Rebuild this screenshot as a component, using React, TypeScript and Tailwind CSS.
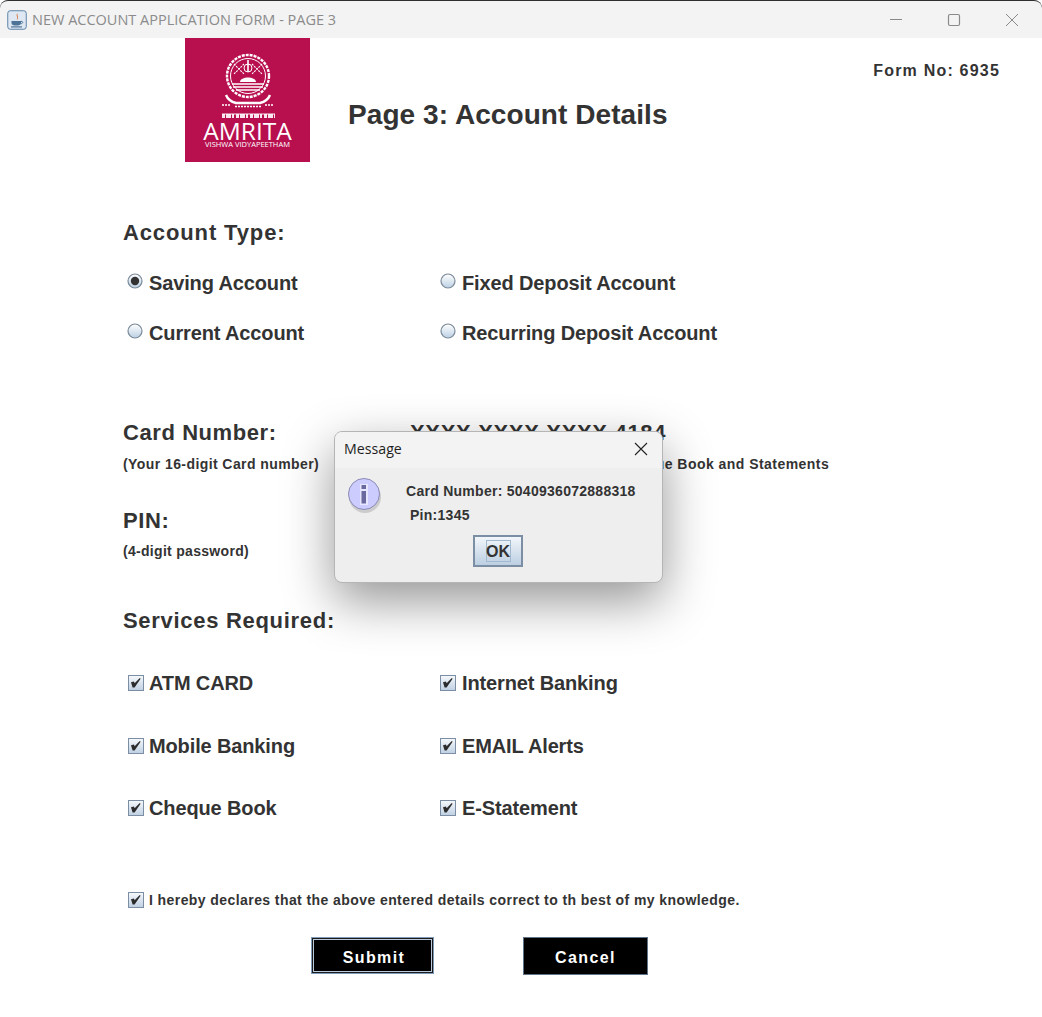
import React from "react";

function Radio({ on, id }: { on?: boolean; id: string }) {
  return (
    <svg width="16" height="16" viewBox="0 0 16 16" className="shrink-0 mb-[4px]">
      <defs>
        <linearGradient id={id} x1="0" y1="0" x2="0" y2="1">
          <stop offset="0" stopColor="#ffffff" />
          <stop offset="1" stopColor="#bcd0e4" />
        </linearGradient>
      </defs>
      <circle cx="8" cy="8" r="7" fill={`url(#${id})`} stroke="#7a8a99" strokeWidth="1.2" />
      {on && <circle cx="8" cy="8" r="4.2" fill="#333333" />}
    </svg>
  );
}

function Check({ id }: { id: string }) {
  return (
    <svg width="16" height="16" viewBox="0 0 16 16" className="shrink-0">
      <defs>
        <linearGradient id={id} x1="0" y1="0" x2="0" y2="1">
          <stop offset="0" stopColor="#f6f9fc" />
          <stop offset="1" stopColor="#bfd0e3" />
        </linearGradient>
      </defs>
      <rect x="0.5" y="0.5" width="15" height="15" fill={`url(#${id})`} stroke="#7b8ea3" />
      <path d="M3 7.2 L6 6.6 L6.6 8.2 L11.8 3 L12.6 3.8 L6.6 12.6 L4.6 12.6 Z" fill="#2b2b2b" />
    </svg>
  );
}

function JavaIcon() {
  return (
    <svg width="20" height="20" viewBox="0 0 20 20" className="shrink-0">
      <rect x="0.75" y="0.75" width="18.5" height="18.5" rx="2.5" fill="#dfe8f2" stroke="#5d83a8" strokeWidth="1" />
      <path d="M10.5 3 C8 6 12 7 9.5 10 C13 8 9.5 6 10.5 3 Z" fill="#d9661f" />
      <path d="M4.5 11 H14 V13 C14 15 12 15.6 9.2 15.6 C6.5 15.6 4.5 15 4.5 13 Z" fill="#4d7397" />
      <path d="M14 11.4 C16.4 11 16.4 13.6 13.6 13.8" fill="none" stroke="#4d7397" strokeWidth="1" />
      <rect x="4" y="16.3" width="11" height="1.2" fill="#4d7397" />
    </svg>
  );
}

function Logo() {
  return (
    <div className="w-[125px] h-[124px] bg-[#b8104f] shrink-0 flex flex-col items-center">
      <svg width="60" height="70" viewBox="0 0 60 70" className="mt-[15px] shrink-0" fill="none" stroke="#ffffff">
        <circle cx="30" cy="23" r="21" strokeWidth="2.4" strokeDasharray="3 1" />
        <circle cx="30" cy="23" r="17.5" strokeWidth="1" />
        <path d="M16 11 L26 21 M26 11 L16 21 M34 11 L44 21 M44 11 L34 21" strokeWidth="1.1" strokeDasharray="2 1" />
        <path d="M30 7 V19" strokeWidth="1.6" />
        <circle cx="30" cy="15" r="4" strokeWidth="1" />
        <path d="M22 29 C22 23 38 23 38 29 Z" fill="#ffffff" stroke="none" />
        <path d="M14 31 H46 M15 34 H45 M18 37 H42" strokeWidth="1.3" />
        <path d="M8 42 C10 47 14 49 18 50 L42 50 C46 49 50 47 52 42" strokeWidth="2.4" />
        <path d="M4 52 H13 M47 52 H56 M17 53.5 H43" strokeWidth="1.6" strokeDasharray="2 1" />
        <path d="M4 63 H57" strokeWidth="4" strokeDasharray="3 1 5 1 2 2" opacity="0.9" />
        <path d="M4 61 H57" strokeWidth="0.9" />
      </svg>
      <div className="mt-[-3px] text-white text-[24.5px] leading-[22px] font-['Open_Sans',sans-serif]">AMRITA</div>
      <div className="mt-[-2px] text-white text-[7.5px] leading-[8px] font-['Open_Sans',sans-serif] whitespace-nowrap">VISHWA VIDYAPEETHAM</div>
    </div>
  );
}

function Dialog() {
  return (
    <div className="absolute left-[334px] top-[431px] w-[329px] h-[152px] rounded-[8px] bg-[#eeeeee] border border-[#b5b5b5] shadow-[0_18px_50px_rgba(0,0,0,0.42)] overflow-hidden flex flex-col">
      <div className="h-[36px] bg-[#f3f3f3] flex items-center justify-between pl-[9px] pr-[14px] pb-[2px] shrink-0">
        <span className="font-['Open_Sans',sans-serif] text-[14.2px] text-[#1f1f1f]">Message</span>
        <svg width="14" height="14" viewBox="0 0 14 14" fill="none" stroke="#222222" strokeWidth="1.1">
          <path d="M1 1 L13 13 M13 1 L1 13" />
        </svg>
      </div>
      <div className="relative flex-1">
        <svg width="36" height="38" viewBox="0 0 36 38" className="absolute left-[12px] top-[9px]">
          <ellipse cx="18" cy="20" rx="16" ry="16" fill="#999999" opacity="0.4" />
          <circle cx="17" cy="17" r="15.5" fill="#ccccff" stroke="#8a8ab5" strokeWidth="1" />
          <rect x="13" y="7" width="8" height="21" fill="#e6e6ff" />
          <rect x="14.5" y="8" width="4.5" height="4" fill="#6a6a9e" />
          <rect x="14.5" y="14" width="4.5" height="12.5" fill="#6a6a9e" />
        </svg>
        <div className="absolute left-[71px] top-[15px] text-[14px] leading-[16px] font-bold text-[#333333] tracking-[0.27px] whitespace-nowrap">Card Number: 5040936072888318</div>
        <div className="absolute left-[75px] top-[39px] text-[14px] leading-[16px] font-bold text-[#333333] tracking-[0.27px] whitespace-nowrap">Pin:1345</div>
        <div className="absolute left-[138px] top-[67px] w-[50px] h-[32px] border-2 border-[#7b8ea3] bg-gradient-to-b from-[#f2f6fa] to-[#bccfe2] flex items-center justify-center">
          <span className="w-[25px] h-[22px] border border-[#a3b9d0] flex items-center justify-center pt-px text-[16px] font-bold text-[#333333]">OK</span>
        </div>
      </div>
    </div>
  );
}

function Choice({ label, mark, inset }: { label: string; mark: React.ReactNode; inset?: boolean }) {
  return (
    <div className="flex items-center gap-[5px] text-[20px] leading-[24px] font-bold text-[#333333] tracking-[-0.13px] whitespace-nowrap">
      <span className={inset ? "w-[17px] flex justify-end" : "w-[17px] flex justify-start"}>{mark}</span>
      <span>{label}</span>
    </div>
  );
}

const heading = "text-[22px] leading-[26px] font-bold text-[#333333]";
const small = "text-[14px] leading-[16px] font-bold text-[#333333] whitespace-nowrap";

export default function App() {
  return (
    <div className="relative w-[1042px] h-[1017px] bg-white overflow-hidden font-['Liberation_Sans',Arial,sans-serif]">
      <div className="h-[38px] bg-[#f3f3f3] border-t border-[#2e2e2e] rounded-t-[8px] flex items-center pl-[7px] pr-[23px]">
        <JavaIcon />
        <span className="ml-[5px] font-['Open_Sans',sans-serif] text-[14.5px] text-[#8b8b8b] whitespace-nowrap">NEW ACCOUNT APPLICATION FORM - PAGE 3</span>
        <div className="ml-auto flex items-center gap-[44px]">
          <svg width="14" height="14" viewBox="0 0 14 14" fill="none" stroke="#8a8a8a" strokeWidth="1"><path d="M1 6.5 H13" /></svg>
          <svg width="14" height="14" viewBox="0 0 14 14" fill="none" stroke="#8a8a8a" strokeWidth="1.2"><rect x="1.5" y="1.5" width="11" height="11" rx="1.5" /></svg>
          <svg width="14" height="14" viewBox="0 0 14 14" fill="none" stroke="#8a8a8a" strokeWidth="1"><path d="M1 1 L13 13 M13 1 L1 13" /></svg>
        </div>
      </div>

      <div className="flex h-[124px] pl-[185px] pr-[42px]">
        <Logo />
        <h1 className="ml-[38px] mt-[61px] text-[28px] leading-[32px] font-bold text-[#333333] tracking-[0.07px] whitespace-nowrap">Page 3: Account Details</h1>
        <div className="ml-auto mt-[24px] text-[16px] leading-[18px] font-bold text-[#333333] tracking-[1.2px] whitespace-nowrap">Form No: 6935</div>
      </div>

      <div className="pl-[123px] pt-[58px]">
        <div className={`${heading} tracking-[0.87px]`}>Account Type:</div>
        <div className="mt-[25px] ml-[4px] grid grid-cols-[313px_1fr] gap-y-[26px]">
          <Choice label="Saving Account" mark={<Radio on id="r1" />} />
          <Choice label="Fixed Deposit Account" mark={<Radio id="r2" />} />
          <Choice label="Current Account" mark={<Radio id="r3" />} />
          <Choice label="Recurring Deposit Account" mark={<Radio id="r4" />} />
        </div>

        <div className="mt-[75px] grid grid-cols-[287px_1fr]">
          <div className={`${heading} tracking-[0.58px]`}>Card Number:</div>
          <div className={`${heading} tracking-[0.67px] whitespace-nowrap`}>XXXX XXXX XXXX 4184</div>
          <div className={`${small} tracking-[0.42px] mt-[10px]`}>(Your 16-digit Card number)</div>
          <div className={`${small} tracking-[0.46px] mt-[10px]`}>It would appear on ATM Card/Cheque Book and Statements</div>
        </div>

        <div className="mt-[36px]">
          <div className={`${heading} tracking-[0.6px]`}>PIN:</div>
          <div className={`${small} tracking-[0.3px] mt-[9px]`}>(4-digit password)</div>
        </div>

        <div className={`${heading} tracking-[0.7px] mt-[49px]`}>Services Required:</div>

        <div className="mt-[37px] ml-[4px] grid grid-cols-[313px_1fr] gap-y-[38.5px]">
          <Choice inset label="ATM CARD" mark={<Check id="c1" />} />
          <Choice label="Internet Banking" mark={<Check id="c2" />} />
          <Choice inset label="Mobile Banking" mark={<Check id="c3" />} />
          <Choice label="EMAIL Alerts" mark={<Check id="c4" />} />
          <Choice inset label="Cheque Book" mark={<Check id="c5" />} />
          <Choice label="E-Statement" mark={<Check id="c6" />} />
        </div>

        <div className="mt-[72px] ml-[5px] flex items-center gap-[5px] text-[14px] leading-[16px] font-bold text-[#333333] tracking-[0.42px] whitespace-nowrap">
          <Check id="c7" />
          <span>I hereby declares that the above entered details correct to th best of my knowledge.</span>
        </div>

        <div className="mt-[29px] ml-[188px] flex gap-[89px]">
          <div className="w-[123px] h-[37px] bg-black border border-[#7f9ab8] shadow-[inset_0_0_0_1px_#1c1c1c,inset_0_0_0_2px_#b9cadc] flex items-center justify-center pt-[4px] pl-[3px] text-white text-[16px] font-bold tracking-[1.4px]">Submit</div>
          <div className="w-[125px] h-[38px] bg-black border border-[#5f7286] flex items-center justify-center pt-[4px] text-white text-[16px] font-bold tracking-[1.4px]">Cancel</div>
        </div>
      </div>

      <Dialog />
    </div>
  );
}
